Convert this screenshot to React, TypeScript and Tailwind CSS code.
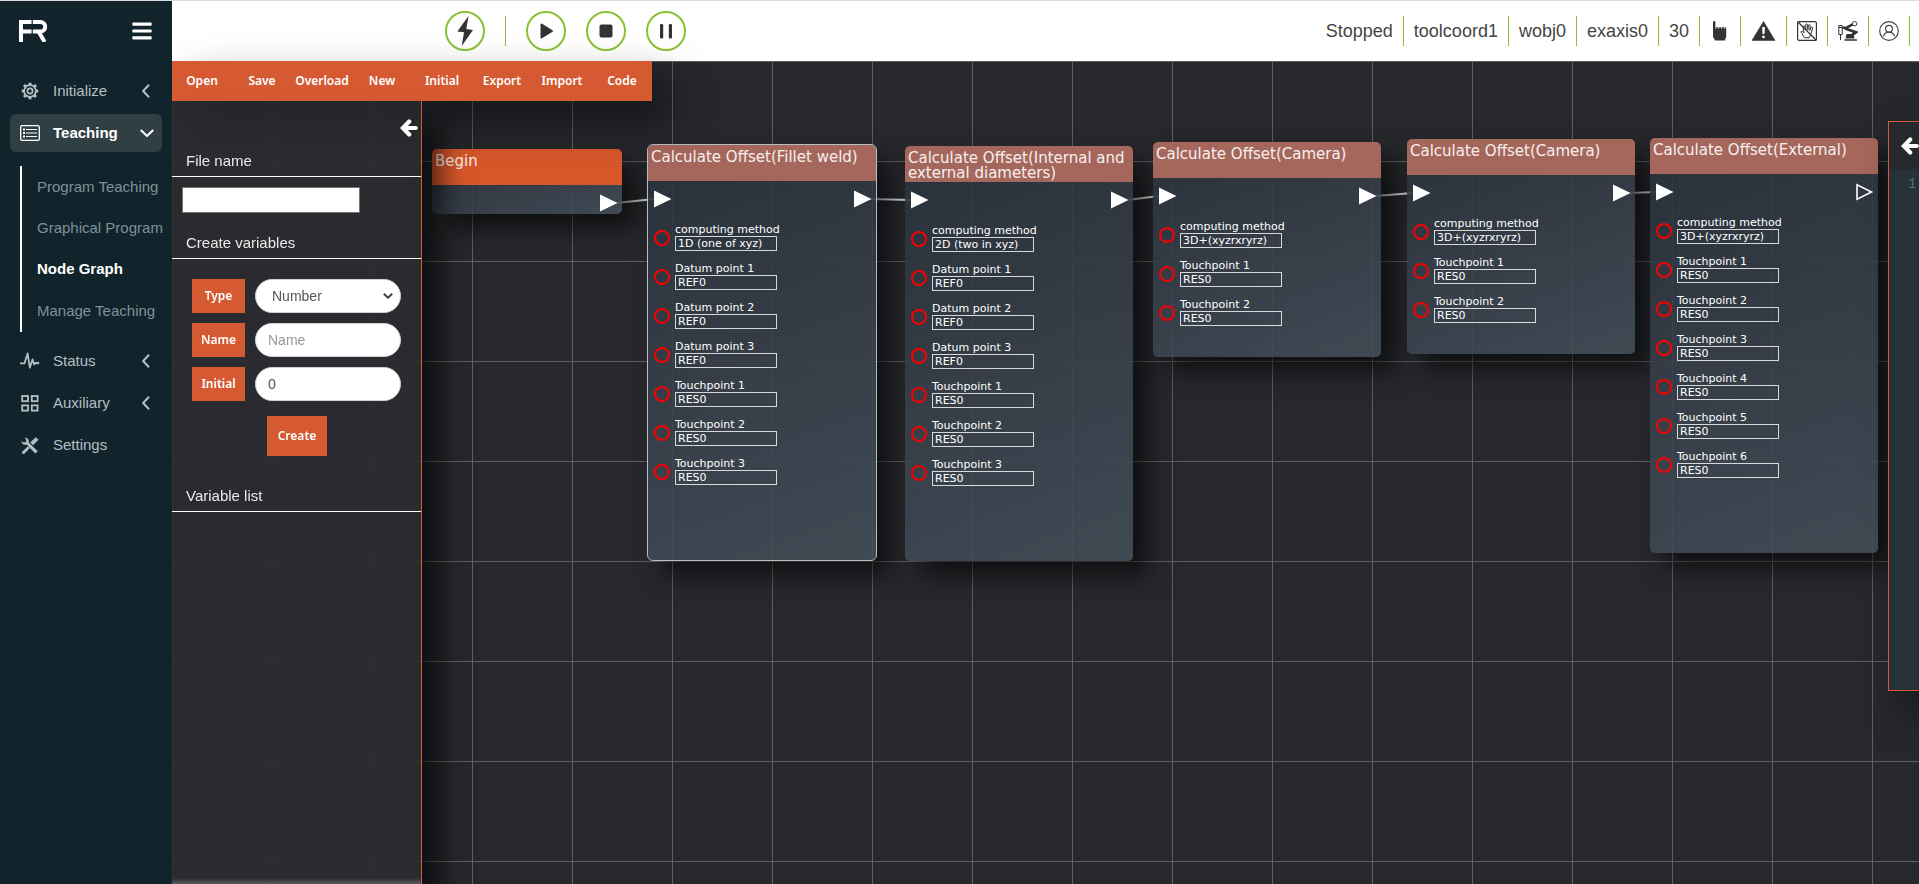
import type { ReactNode } from "react";
import { FaBars } from "react-icons/fa";

const SANS = "font-['Liberation_Sans',Arial,sans-serif]";
const HUMANIST = "font-['Noto_Sans',Tahoma,sans-serif]";
const WIDE = "font-['DejaVu_Sans',Verdana,sans-serif]";

/* ---------- icons ---------- */

function Logo() {
  return (
    <svg viewBox="0 0 28 22" className="h-[22px] w-7" fill="none" stroke="#fff" strokeWidth="4" aria-label="FR">
      <path d="M2 22V2H12.6M2 11.6H12.6" />
      <path d="M13.8 2H21.4a4.8 4.8 0 0 1 0 9.6H13.8" />
      <path d="M19.6 11.4L25.6 22" />
    </svg>
  );
}

function ArrowLeftIcon() {
  return (
    <svg
      viewBox="0 0 18 18"
      className="h-[18px] w-[18px] shrink-0"
      fill="none"
      stroke="currentColor"
      strokeWidth="4.200"
      strokeLinecap="round"
    >
      <path d="M9.200 2.500L2.900 9l6.300 6.500M4 9h11.800" />
    </svg>
  );
}

function GearIcon() {
  return (
    <svg viewBox="0 0 18 18" className="h-[18px] w-[18px]" fill="none" stroke="currentColor">
      <circle cx="9" cy="9" r="5.9" strokeWidth="1.7" />
      <circle cx="9" cy="9" r="2.6" strokeWidth="1.7" />
      <path
        strokeWidth="3"
        d="M9 .8V3M9 15v2.2M.8 9H3M15 9h2.2M3 3l1.8 1.8M13.2 13.2L15 15M3 15l1.8-1.8M13.2 4.8L15 3"
      />
    </svg>
  );
}

function ListIcon() {
  return (
    <svg viewBox="0 0 20 16" className="h-4 w-5" fill="none" stroke="currentColor">
      <rect x=".7" y=".7" width="18.6" height="14.6" rx="1.4" strokeWidth="1.3" />
      <path strokeWidth="1" d="M6 4.5h11M6 8h11M6 11.5h11" />
      <path strokeWidth="2" d="M3 4.5h2M3 8h2M3 11.5h2" />
    </svg>
  );
}

function PulseIcon() {
  return (
    <svg viewBox="0 0 20 18" className="h-[18px] w-5" fill="none" stroke="currentColor" strokeLinejoin="round">
      <path strokeWidth="1.8" d="M0 11.4h4.4L7.6 1.4 9.8 15.6 12.6 7.4 14.2 12.6 15.2 11h3" />
      <circle cx="18" cy="11" r="1.1" fill="currentColor" strokeWidth=".6" />
    </svg>
  );
}

function GridIcon() {
  return (
    <svg viewBox="0 0 18 17" className="h-[17px] w-[18px]" fill="none" stroke="currentColor" strokeWidth="1.8">
      <rect x="1.2" y="1" width="5.8" height="5.2" />
      <rect x="10.8" y="1" width="5.8" height="5.2" />
      <rect x="1.2" y="10.4" width="5.8" height="5.2" />
      <rect x="10.8" y="10.4" width="5.8" height="5.2" />
    </svg>
  );
}

function ToolsIcon() {
  return (
    <svg viewBox="0 0 18 17" className="h-[17px] w-[18px]" fill="currentColor">
      <path d="M3.6.4a3.9 3.9 0 0 1 4 5.2l9.2 8.6-2.5 2.4-8.7-9A3.9 3.9 0 0 1 .4 4L2.8 5.600 5 4.900 5.300 2.700z" />
      <path d="M14.700.2l2.900 2.500-5.600 5.600-2.800-2.700z" />
      <path d="M7 9.200l1.900 1.900-5.600 5.600L1 16.800l.1-2z" />
    </svg>
  );
}

function Chevron({ down = false }: { down?: boolean }) {
  return down ? (
    <svg viewBox="0 0 14 8" className="h-2 w-3.5" fill="none" stroke="currentColor" strokeWidth="2">
      <path d="M.8 1L7 7l6.200-6" />
    </svg>
  ) : (
    <svg viewBox="0 0 8 14" className="mr-1 h-3.5 w-2" fill="none" stroke="currentColor" strokeWidth="2">
      <path d="M7 .8L1.200 7 7 13.200" />
    </svg>
  );
}

function HandIcon() {
  return (
    <svg viewBox="0 0 20 20" className="h-5 w-5" fill="#333">
      <path d="M3 1.200a1.200 1.200 0 0 1 2.400 0V8h.7V6.300h2.300V8h.7V6.300h2.300V8h.7V6.300h2.300V8h.6V6.600h1.200v9.400l-1 2.200v1.400H5l-.8-1.800-1.200-1.600z" />
    </svg>
  );
}

function WarningIcon() {
  return (
    <svg viewBox="0 0 25 20" className="h-5 w-[25px]">
      <path d="M12.500.4L24 19.400H1z" fill="#333" stroke="#333" strokeWidth=".6" strokeLinejoin="round" />
      <path d="M11.100 6h2.800l-.4 7h-2z" fill="#fff" />
      <circle cx="12.500" cy="15.900" r="1.400" fill="#fff" />
    </svg>
  );
}

function NoDragIcon() {
  return (
    <svg viewBox="0 0 20 20" className="h-5 w-5" fill="none" stroke="#333" strokeLinejoin="round" strokeLinecap="round">
      <rect x=".6" y=".6" width="18.800" height="18.800" rx="1.600" strokeWidth="1.200" />
      <path d="M1 1l18 18" strokeWidth="1.200" />
      <path
        strokeWidth="1"
        d="M7.200 16.400L4.200 11.200c-.5-1 .8-1.600 1.500-.8l1.300 1.500-.9-6c-.1-1.200 1.400-1.400 1.700-.2L8.800 9l-.1-5.200c0-1.300 1.700-1.300 1.800 0L10.800 9l.7-4.700c.2-1.200 1.800-1 1.700.2L12.900 9.400l1.200-2.900c.5-1 1.800-.5 1.500.6l-1.800 6.100-1.400 3.200z"
      />
    </svg>
  );
}

function RobotIcon() {
  return (
    <svg viewBox="0 0 20 20" className="h-5 w-5" fill="none" stroke="#333">
      <path strokeWidth="1" d="M.8 4.500h3.400v9H.8zM2.500 13.500V19M.8 6.500h3.400" />
      <path strokeWidth="2.600" d="M4.500 6.800h3M7 7.600L14.500 3.400" />
      <path strokeWidth="2.800" d="M7 7.500l11 3.700-5.500 4" />
      <circle cx="16.600" cy="2.700" r="2.200" strokeWidth="1" />
      <path fill="#333" stroke="none" d="M8.500 13h7l1 4.500h-9zM6.500 18.200h12.500V19.800H6.500z" />
    </svg>
  );
}

function UserIcon() {
  return (
    <svg viewBox="0 0 20 20" className="h-5 w-5" fill="none" stroke="#444" strokeWidth="1.200">
      <circle cx="10" cy="10" r="9.300" />
      <circle cx="10" cy="7.800" r="3.400" />
      <path d="M4.400 15.400c.8-2.600 2.800-4.200 5.600-4.200s4.800 1.600 5.600 4.200" />
    </svg>
  );
}

/* ---------- sidebar ---------- */

type NavItemProps = { icon: ReactNode; label: string; arrow?: "left" | "down"; active?: boolean };

function NavItem({ icon, label, arrow, active = false }: NavItemProps) {
  return (
    <a
      href="#"
      className={`mx-2.5 flex h-[38px] items-center rounded-md pl-2.5 pr-2 text-[15px] ${
        active ? "bg-[#303f44] font-bold text-white" : "text-[#b3bfc4]"
      }`}
    >
      <span className="flex w-5 justify-center">{icon}</span>
      <span className="ml-[13px] flex-1">{label}</span>
      {arrow && <Chevron down={arrow === "down"} />}
    </a>
  );
}

function Sidebar() {
  const pages = ["Program Teaching", "Graphical Program", "Node Graph", "Manage Teaching"];
  return (
    <aside className="flex w-[172px] shrink-0 flex-col bg-[#11242b]">
      <div className="flex h-[60px] items-center justify-between pl-[19px] pr-5">
        <Logo />
        <button type="button" aria-label="Menu" className="text-white">
          <FaBars className="h-[22px] w-5" />
        </button>
      </div>
      <nav className="mt-[11px] flex flex-col gap-1">
        <NavItem icon={<GearIcon />} label="Initialize" arrow="left" />
        <NavItem icon={<ListIcon />} label="Teaching" arrow="down" active />
        <ul className="mb-1.5 ml-5 mt-2.5 flex flex-col border-l-2 border-white">
          {pages.map((page) => (
            <li key={page} className="flex h-[41px] items-center pl-[15px] first:h-[42px] last:h-[42px]">
              <a
                href="#"
                className={`whitespace-nowrap text-[15px] ${
                  page === "Node Graph" ? "font-bold text-white" : "text-[#7d929b]"
                }`}
              >
                {page}
              </a>
            </li>
          ))}
        </ul>
        <NavItem icon={<PulseIcon />} label="Status" arrow="left" />
        <NavItem icon={<GridIcon />} label="Auxiliary" arrow="left" />
        <NavItem icon={<ToolsIcon />} label="Settings" />
      </nav>
    </aside>
  );
}

/* ---------- header ---------- */

function RoundButton({ label, children }: { label: string; children: ReactNode }) {
  return (
    <button type="button" aria-label={label} className="h-10 w-10 rounded-full border-2 border-[#8bc034] bg-white">
      <svg viewBox="2 2 36 36" className="h-9 w-9" fill="#333">
        {children}
      </svg>
    </button>
  );
}

function StatusCell({ children }: { children: ReactNode }) {
  return (
    <span className="flex h-[30px] items-center border-r border-[#8bc034] px-2.5 text-lg text-[#444]">{children}</span>
  );
}

function Header() {
  return (
    <header className="flex h-[60px] items-center bg-white pl-[273px] pr-[9px]">
      <div className="flex items-center gap-5">
        <RoundButton label="Enable">
          <path d="M23.500 5L12.300 20.500l6.700.8L16.700 35 28 19l-6.700-1z" />
        </RoundButton>
        <span className="h-[30px] w-px bg-[#8bc034]" />
        <RoundButton label="Start">
          <path d="M15.500 13.500v13L26 20z" stroke="#333" strokeWidth="2" strokeLinejoin="round" />
        </RoundButton>
        <RoundButton label="Stop">
          <rect x="13.500" y="13.500" width="13" height="13" rx="2" />
        </RoundButton>
        <RoundButton label="Pause">
          <rect x="14" y="13" width="3.200" height="14.500" rx="1.200" />
          <rect x="22.800" y="13" width="3.200" height="14.500" rx="1.200" />
        </RoundButton>
      </div>
      <div className="ml-auto flex">
        <StatusCell>Stopped</StatusCell>
        <StatusCell>toolcoord1</StatusCell>
        <StatusCell>wobj0</StatusCell>
        <StatusCell>exaxis0</StatusCell>
        <StatusCell>30</StatusCell>
        <StatusCell><HandIcon /></StatusCell>
        <StatusCell><WarningIcon /></StatusCell>
        <StatusCell><NoDragIcon /></StatusCell>
        <StatusCell><RobotIcon /></StatusCell>
        <StatusCell><UserIcon /></StatusCell>
      </div>
    </header>
  );
}

/* ---------- node graph ---------- */

type GraphNode = {
  id: string;
  title: string;
  x: number;
  y: number;
  w: number;
  h: number;
  begin?: boolean;
  selected?: boolean;
  last?: boolean;
  fields: [string, string][];
};

const refs: [string, string][] = [
  ["Datum point 1", "REF0"],
  ["Datum point 2", "REF0"],
  ["Datum point 3", "REF0"],
];

const touch = (count: number): [string, string][] =>
  Array.from({ length: count }, (_, i) => [`Touchpoint ${i + 1}`, "RES0"]);

const nodes: GraphNode[] = [
  { id: "begin", title: "Begin", x: 260, y: 88, w: 190, h: 65, begin: true, fields: [] },
  {
    id: "fillet", title: "Calculate Offset(Fillet weld)", x: 476, y: 84, w: 228, h: 415, selected: true,
    fields: [["computing method", "1D (one of xyz)"], ...refs, ...touch(3)],
  },
  {
    id: "diameters", title: "Calculate Offset(Internal and external diameters)", x: 733, y: 85, w: 228, h: 415,
    fields: [["computing method", "2D (two in xyz)"], ...refs, ...touch(3)],
  },
  {
    id: "camera-1", title: "Calculate Offset(Camera)", x: 981, y: 81, w: 228, h: 215,
    fields: [["computing method", "3D+(xyzrxryrz)"], ...touch(2)],
  },
  {
    id: "camera-2", title: "Calculate Offset(Camera)", x: 1235, y: 78, w: 228, h: 215,
    fields: [["computing method", "3D+(xyzrxryrz)"], ...touch(2)],
  },
  {
    id: "external", title: "Calculate Offset(External)", x: 1478, y: 77, w: 228, h: 415, last: true,
    fields: [["computing method", "3D+(xyzrxryrz)"], ...touch(6)],
  },
];

function Pin({ hollow = false }: { hollow?: boolean }) {
  return (
    <svg viewBox="0 0 18 18" className="h-[18px] w-[18px]" fill={hollow ? "none" : "#fff"}>
      <path d={hollow ? "M1 1.800v14.400L15.500 9z" : "M0 .5v17L17.500 9z"} stroke={hollow ? "#fff" : "none"} strokeWidth="1.600" />
    </svg>
  );
}

function NodeCard({ node }: { node: GraphNode }) {
  return (
    <section
      className={`absolute overflow-hidden rounded-[5px] bg-linear-160 from-[#28313b]/90 via-[#373f4a]/90 to-[#424e58]/90 shadow-[15px_15px_24px_rgba(0,0,0,0.6)] ${
        node.selected ? "outline outline-[#b9bdc6]" : ""
      }`}
      style={{ left: node.x, top: node.y, width: node.w, height: node.h }}
    >
      <h3
        className={`h-9 pl-[3px] pt-[5px] text-[15px] leading-[15px] text-white/90 ${
          node.begin ? "bg-[#d7572b]" : "bg-[#a5665b]"
        }`}
      >
        {node.title}
      </h3>
      <div className="flex justify-between pl-1.5 pr-1 pt-[9px]">
        {node.begin ? <span /> : <Pin />}
        <Pin hollow={node.last} />
      </div>
      <div className="mt-[14px] flex flex-col gap-2 pl-1.5">
        {node.fields.map(([label, value]) => (
          <label key={label} className="flex h-[31px] items-start">
            <span className="mt-2 h-4 w-4 rounded-full border-2 border-[#f80000]" />
            <span className="ml-[5px] flex flex-col text-[11px] text-white">
              <span className="h-[14px] leading-[15px]">{label}</span>
              <input
                readOnly
                value={value}
                className="h-[15px] w-[102px] border border-white/80 bg-transparent pl-0.5 leading-[13px]"
              />
            </span>
          </label>
        ))}
      </div>
    </section>
  );
}

function Links() {
  const paths = nodes.slice(1).map((to, i) => {
    const from = nodes[i];
    const x1 = from.x + from.w - 6;
    const y1 = from.y + 54;
    const x2 = to.x + 6;
    const y2 = to.y + 54;
    return `M${x1} ${y1}L${x2} ${y2}`;
  });
  return (
    <svg className="absolute inset-0 h-full w-full" fill="none" stroke="#dadcde" strokeWidth="2">
      {paths.map((d) => (
        <path key={d} d={d} />
      ))}
    </svg>
  );
}

/* ---------- editor panels ---------- */

function Toolbar() {
  const actions = ["Open", "Save", "Overload", "New", "Initial", "Export", "Import", "Code"];
  return (
    <div className={`absolute left-0 top-0 z-10 flex bg-[#d55a32] shadow-[20px_20px_40px_rgba(0,0,0,0.5)] ${HUMANIST}`}>
      {actions.map((action) => (
        <button key={action} type="button" className="h-10 w-[60px] text-xs font-semibold text-white">
          {action}
        </button>
      ))}
    </div>
  );
}

function SectionTitle({ children }: { children: ReactNode }) {
  return <h2 className="border-b border-white pb-1.5 pl-3.5 text-[15px] leading-[18px] text-white/90">{children}</h2>;
}

const tag = `flex h-[34px] w-[53px] items-center justify-center bg-[#d55a32] text-xs font-semibold text-white ${HUMANIST}`;
const box = "h-[34px] w-[146px] rounded-full border border-[#ced4da] bg-white px-3 text-sm text-[#555] placeholder:text-[#999]";

function VariablesPanel() {
  return (
    <div className="absolute bottom-0 left-0 top-10 z-20 flex w-[250px] flex-col border-r border-[#d55a32] bg-[#2b2c30]/70 shadow-[20px_24px_24px_rgba(0,0,0,0.6)] backdrop-blur-[4px]">
      <button type="button" aria-label="Collapse" className="ml-auto mr-[3px] mt-[18px] text-white">
        <ArrowLeftIcon />
      </button>
      <div className="mt-[15px]">
        <SectionTitle>File name</SectionTitle>
      </div>
      <input aria-label="File name" className="ml-2.5 mt-2.5 h-[26px] w-[178px] border border-[#767676] bg-white px-1 text-sm" />
      <div className="mt-[21px]">
        <SectionTitle>Create variables</SectionTitle>
      </div>
      <form className="mt-5 flex flex-col gap-2.5 pl-5">
        <div className="flex gap-2.5">
          <label htmlFor="var-type" className={tag}>Type</label>
          <div className="relative">
            <select id="var-type" className={`${box} appearance-none pl-4`} defaultValue="Number">
              <option>Number</option>
              <option>String</option>
            </select>
            <svg viewBox="0 0 10 6" className="pointer-events-none absolute right-2 top-[14px] h-1.5 w-2.5" fill="none" stroke="#444" strokeWidth="2">
              <path d="M.8.8L5 4.800 9.200.8" />
            </svg>
          </div>
        </div>
        <div className="flex gap-2.5">
          <label htmlFor="var-name" className={tag}>Name</label>
          <input id="var-name" placeholder="Name" className={box} />
        </div>
        <div className="flex gap-2.5">
          <label htmlFor="var-initial" className={tag}>Initial</label>
          <input id="var-initial" defaultValue="0" className={box} />
        </div>
        <button type="button" className={`ml-[75px] mt-[5px] h-10 w-[60px] bg-[#d55a32] text-xs font-semibold text-white ${HUMANIST}`}>
          Create
        </button>
      </form>
      <div className="mt-[31px]">
        <SectionTitle>Variable list</SectionTitle>
      </div>
      <div className="mt-auto h-1.5 bg-linear-to-b from-transparent to-[#5a5c5f]" />
    </div>
  );
}

function CodePanel() {
  return (
    <div className="absolute right-0 top-[60px] z-10 flex h-[570px] w-[31px] flex-col overflow-hidden border-y border-l border-[#d55a32] bg-[#263238] shadow-[20px_20px_40px_rgba(0,0,0,0.6)]">
      <button type="button" aria-label="Expand code" className="flex h-[47px] w-full items-center bg-[#27282c] pl-3 text-white">
        <ArrowLeftIcon />
      </button>
      <pre className="pl-[19px] pt-1 font-['Liberation_Mono',monospace] text-sm leading-[22px] text-[#546e7a]">1</pre>
    </div>
  );
}

export default function App() {
  return (
    <div className={`flex min-h-screen flex-col border-t border-[#dcdcdc] bg-[#27282c] ${SANS}`}>
      <div className="flex flex-1">
        <Sidebar />
        <main className="flex min-w-0 flex-1 flex-col overflow-hidden">
          <Header />
          <div className="relative flex-1 bg-[#27282c] bg-[linear-gradient(to_right,#5e5f5e_1px,transparent_1px),linear-gradient(to_bottom,#5e5f5e_1px,transparent_1px)] bg-[size:100px_100px]">
            <div className={`absolute inset-0 overflow-hidden ${WIDE}`}>
              <Links />
              {nodes.map((node) => (
                <NodeCard key={node.id} node={node} />
              ))}
            </div>
            <Toolbar />
            <VariablesPanel />
            <CodePanel />
          </div>
        </main>
      </div>
    </div>
  );
}
